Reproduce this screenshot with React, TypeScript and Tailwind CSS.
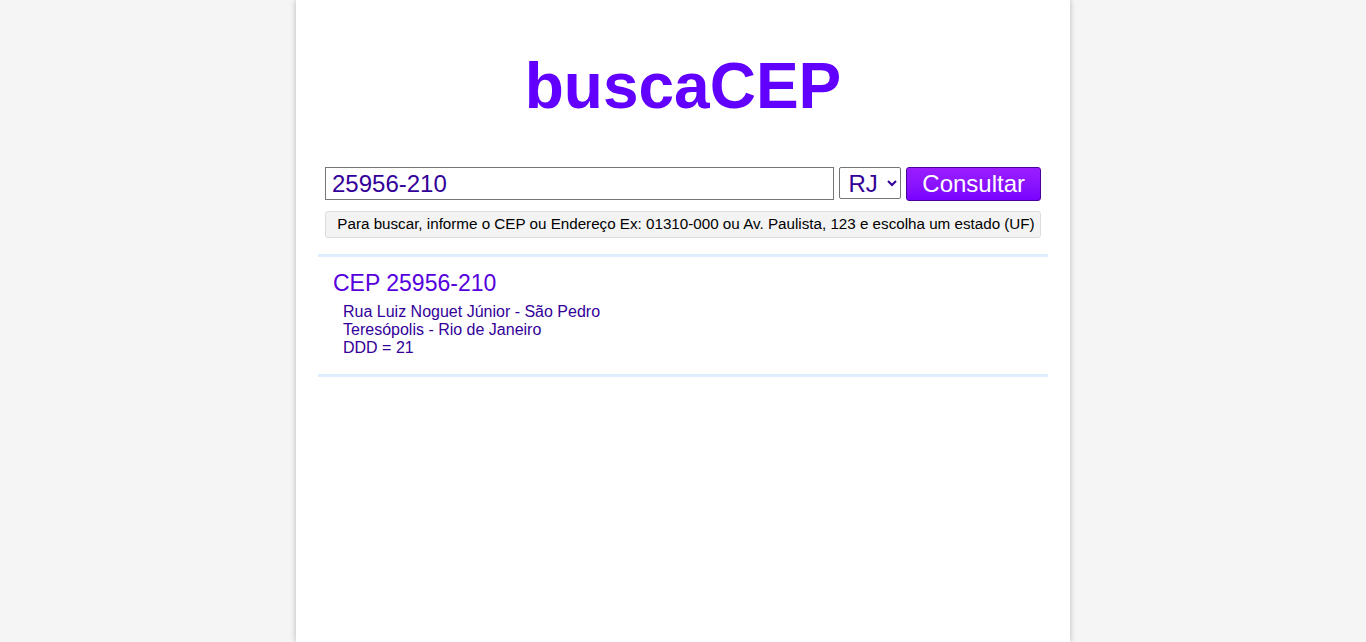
export default function App() {
  return (
    <div className="min-h-screen bg-[#f5f5f5] font-['Liberation_Sans',Arial,sans-serif]">
      <div className="mx-auto w-[774px] min-h-[642px] bg-white shadow-[0_0_6px_rgba(0,0,0,0.25)] px-[22px]">
        {/* Title */}
        <h1 className="pt-[50px] h-[167px] text-center text-[64px] leading-[72px] font-bold text-[#6200ff]">
          buscaCEP
        </h1>

        {/* Search form */}
        <div className="px-[7px]">
          <div className="flex items-start gap-[5px]">
            <input
              defaultValue="25956-210"
              className="w-[511px] h-[33px] border border-[#767676] px-[6px] text-[24px] text-[#330099] outline-none"
            />
            <select
              defaultValue="RJ"
              className="w-[62px] h-[32px] border border-[#767676] rounded-[2px] pl-[4px] text-[24px] text-[#330099] bg-white"
            >
              <option>RJ</option>
              <option>SP</option>
              <option>MG</option>
            </select>
            <button className="w-[135px] h-[34px] rounded-[3px] border border-[#4b0099] bg-gradient-to-b from-[#9b1cff] to-[#7a00ff] text-white text-[24px] leading-none">
              Consultar
            </button>
          </div>
          <div className="mt-[10px] h-[27px] flex items-center justify-center pl-[6px] rounded-[3px] border border-[#dddddd] bg-[#f3f3f3] text-[15.2px] text-black">
            Para buscar, informe o CEP ou Endereço Ex: 01310-000 ou Av. Paulista, 123 e escolha um estado (UF)
          </div>
        </div>

        {/* Result */}
        <div className="mt-[16px] border-y-[3px] border-[#deeeff] px-[15px] pt-[12px] pb-[17px]">
          <h2 className="text-[23px] leading-[28px] text-[#5500dd]">CEP 25956-210</h2>
          <div className="mt-[6px] pl-[10px] text-[16px] leading-[18px] text-[#330099]">
            <p>Rua Luiz Noguet Júnior - São Pedro</p>
            <p>Teresópolis - Rio de Janeiro</p>
            <p>DDD = 21</p>
          </div>
        </div>
      </div>
    </div>
  )
}
